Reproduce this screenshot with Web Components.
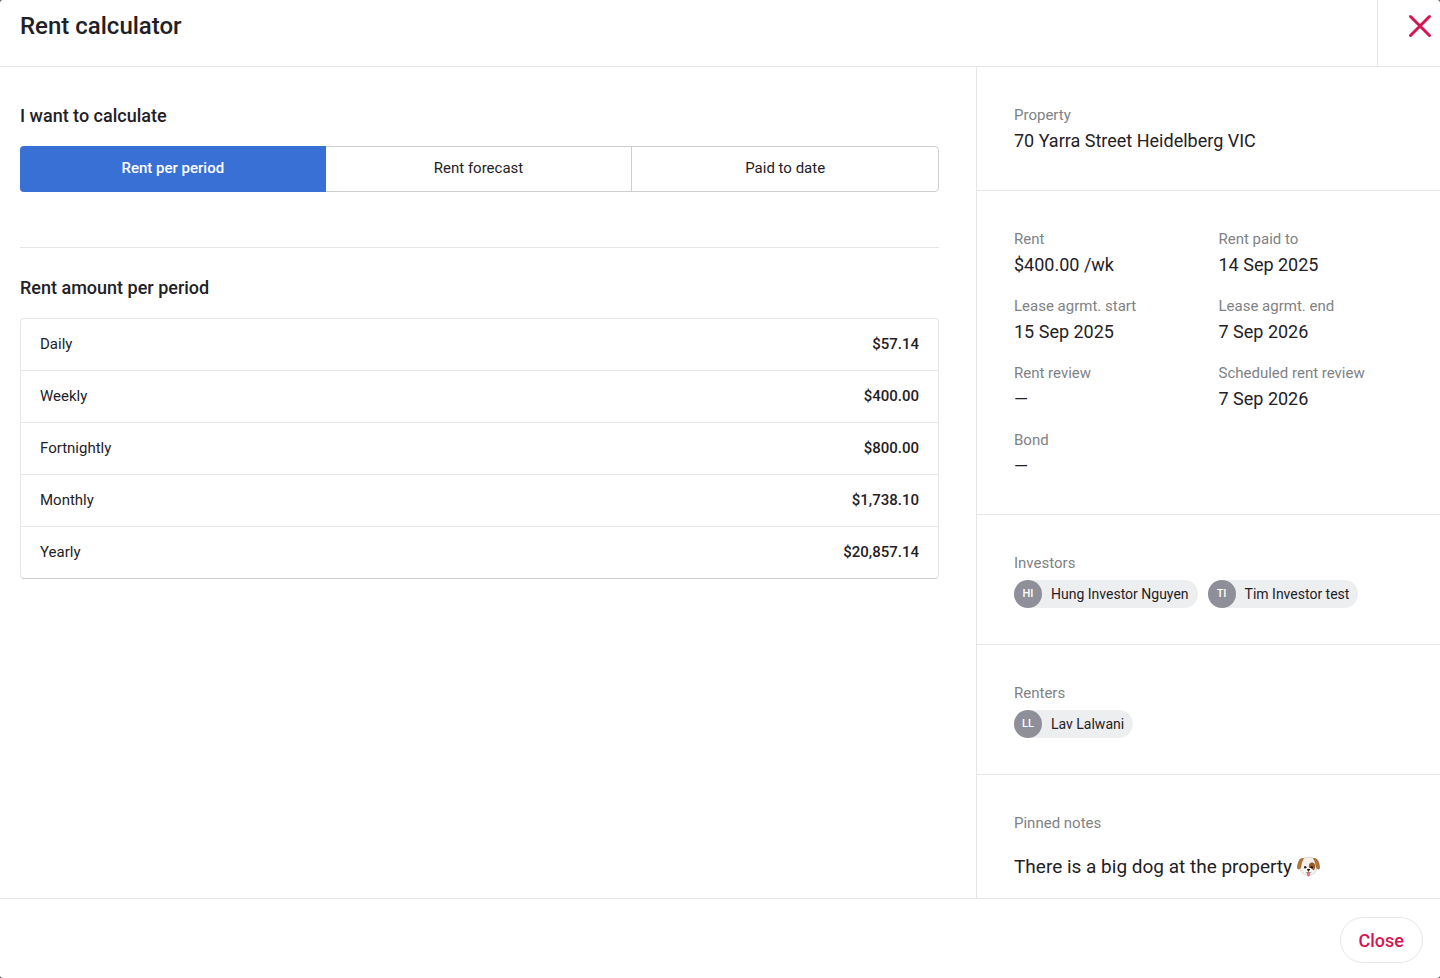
<!DOCTYPE html>
<html lang="en">
<head>
<meta charset="utf-8">
<meta name="viewport" content="width=device-width, initial-scale=1">
<title>Rent calculator</title>
<style>
    html, body {
        height: 100%;
        margin: 0;
    }
    body {
        --line: #e6e6e7;
        --line-strong: #cdced0;
        --ink: #1f2126;
        --muted: #808286;
        --primary: #3970d5;
        --accent: #d6144f;
        background: #55565a;
        color: var(--ink);
        font-family: Roboto, "Liberation Sans", sans-serif;
        font-size: 15px;
    }
</style>
</head>
<body>
<modal-frame heading="Rent calculator">
    <titled-block heading="I want to calculate">
        <segment-control options="Rent per period|Rent forecast|Paid to date"></segment-control>
    </titled-block>
    <titled-block heading="Rent amount per period" class="ruled">
        <amount-table></amount-table>
    </titled-block>

    <side-section slot="side">
        <detail-item label="Property">70 Yarra Street Heidelberg VIC</detail-item>
    </side-section>
    <side-section slot="side" columns>
        <detail-item label="Rent">$400.00 /wk</detail-item>
        <detail-item label="Rent paid to">14 Sep 2025</detail-item>
        <detail-item label="Lease agrmt. start">15 Sep 2025</detail-item>
        <detail-item label="Lease agrmt. end">7 Sep 2026</detail-item>
        <detail-item label="Rent review">—</detail-item>
        <detail-item label="Scheduled rent review">7 Sep 2026</detail-item>
        <detail-item label="Bond">—</detail-item>
    </side-section>
    <side-section slot="side">
        <detail-item label="Investors" kind="chips">
            <person-chip initials="HI">Hung Investor Nguyen</person-chip>
            <person-chip initials="TI">Tim Investor test</person-chip>
        </detail-item>
    </side-section>
    <side-section slot="side">
        <detail-item label="Renters" kind="chips">
            <person-chip initials="LL">Lav Lalwani</person-chip>
        </detail-item>
    </side-section>
    <side-section slot="side">
        <detail-item label="Pinned notes" kind="note">There is a big dog at the property <dog-face></dog-face></detail-item>
    </side-section>

    <pill-button slot="footer">Close</pill-button>
</modal-frame>

<script>
/**
 * BaseElement
 * -----------
 * Clones the template string of the
 * subclass into an open shadow root
 */
class BaseElement extends HTMLElement {
    constructor(){
        super();
        this.template = document.createElement('template');
        this.template.innerHTML = this.constructor.templateString;
        this.attachShadow({mode: 'open'});
        this.shadowRoot.append(
            this.template.content.cloneNode(true)
        );
    }

    // Copy an attribute's value into an element of the shadow root
    fill(selector, attribute){
        this.shadowRoot.querySelector(selector).textContent = this.getAttribute(attribute) || '';
    }
}

/**
 * Full window dialog: title bar, main pane,
 * side pane and footer
 */
class ModalFrame extends BaseElement {
    static templateString = `
<style>
    :host {
        display: flex;
        flex-direction: column;
        height: 100%;
        overflow: hidden;
        border-radius: 3px;
        background: #fff;
    }
    header {
        display: flex;
        justify-content: space-between;
        border-bottom: 1px solid var(--line);
    }
    h1 {
        margin: 0;
        padding: 12px 20px 26px;
        font-size: 24px;
        line-height: 28px;
        font-weight: 500;
    }
    .close {
        display: flex;
        align-items: flex-start;
        margin: 0;
        padding: 14px 8px 0 30px;
        border: 0;
        border-left: 1px solid var(--line);
        background: none;
        color: var(--accent);
        cursor: pointer;
    }
    .panes {
        display: flex;
        flex: 1;
        min-height: 0;
    }
    main {
        flex: 1;
        min-width: 0;
        padding: 36px 37px 36px 20px;
        overflow: auto;
    }
    aside {
        flex: 0 0 464px;
        box-sizing: border-box;
        border-left: 1px solid var(--line);
        overflow: hidden;
    }
    footer {
        display: flex;
        justify-content: flex-end;
        padding: 18px 17px 15px;
        border-top: 1px solid var(--line);
    }
</style>
<header>
    <h1></h1>
    <button class="close" type="button" aria-label="Close dialog">
        <svg width="24" height="24" viewBox="0 0 24 24" fill="none" stroke="currentColor" stroke-width="3" stroke-linecap="round">
            <path d="M2.500 2.500l19 19M21.500 2.500l-19 19"/>
        </svg>
    </button>
</header>
<div class="panes">
    <main><slot></slot></main>
    <aside><slot name="side"></slot></aside>
</div>
<footer><slot name="footer"></slot></footer>
`;

    connectedCallback(){
        this.fill('h1', 'heading');
    }
}

class TitledBlock extends BaseElement {
    static templateString = `
<style>
    :host {
        display: block;
    }
    :host(.ruled) {
        margin-top: 55px;
        padding-top: 27px;
        border-top: 1px solid var(--line);
    }
    h2 {
        margin: 0 0 18px;
        font-size: 18px;
        line-height: 25px;
        font-weight: 500;
    }
</style>
<h2></h2>
<slot></slot>
`;

    connectedCallback(){
        this.fill('h2', 'heading');
    }
}

/**
 * Row of joined buttons, one of which is pressed
 */
class SegmentControl extends BaseElement {
    static templateString = `
<style>
    :host {
        display: flex;
        height: 46px;
        box-sizing: border-box;
        border: 1px solid var(--line-strong);
        border-radius: 4px;
    }
    button {
        flex: 1 1 0;
        margin: 0;
        padding: 0 0 2px;
        border: 0;
        background: none;
        color: inherit;
        font: inherit;
        cursor: pointer;
    }
    button + button {
        border-left: 1px solid var(--line-strong);
    }
    button[aria-pressed="true"] {
        margin: -1px 0 -1px -1px;
        border-radius: 4px 0 0 4px;
        background: var(--primary);
        color: #fff;
        font-weight: 500;
    }
    button[aria-pressed="true"] + button {
        border-left: 0;
    }
</style>
`;

    connectedCallback(){
        this.getAttribute('options').split('|').forEach((text, index) => {
            let button = document.createElement('button');
            button.type = 'button';
            button.textContent = text;
            button.setAttribute('aria-pressed', index == 0);
            button.addEventListener('click', () => this.select(button));
            this.shadowRoot.append(button);
        });
    }

    select(chosen){
        this.shadowRoot.querySelectorAll('button').forEach(button => {
            button.setAttribute('aria-pressed', button == chosen);
        });
    }
}

class AmountTable extends BaseElement {
    static templateString = `
<style>
    :host {
        display: block;
        border: 1px solid var(--line);
        border-bottom-color: var(--line-strong);
        border-radius: 4px;
    }
    table {
        width: 100%;
        border-collapse: separate;
        border-spacing: 0;
    }
    th, td {
        height: 49px;
        padding: 0 19px 2px;
        border-bottom: 1px solid var(--line);
        font-weight: 400;
        text-align: left;
    }
    td {
        font-weight: 500;
        text-align: right;
    }
    tr:last-child > * {
        border-bottom: 0;
    }
</style>
<table>
    <tbody>
        <tr><th scope="row">Daily</th><td>$57.14</td></tr>
        <tr><th scope="row">Weekly</th><td>$400.00</td></tr>
        <tr><th scope="row">Fortnightly</th><td>$800.00</td></tr>
        <tr><th scope="row">Monthly</th><td>$1,738.10</td></tr>
        <tr><th scope="row">Yearly</th><td>$20,857.14</td></tr>
    </tbody>
</table>
`;
}

class SideSection extends BaseElement {
    static templateString = `
<style>
    :host {
        display: grid;
        gap: 16px 0;
        padding: 36px 17px 36px 37px;
        border-bottom: 1px solid var(--line);
    }
    :host([columns]) {
        grid-template-columns: 1fr 1fr;
        padding-bottom: 35px;
    }
</style>
<slot></slot>
`;
}

/**
 * Muted label over a value. The kind attribute
 * picks between plain text, chips and a note
 */
class DetailItem extends BaseElement {
    static templateString = `
<style>
    :host {
        display: block;
    }
    .label {
        line-height: 24px;
        color: var(--muted);
    }
    .value {
        margin-top: 1px;
        font-size: 18px;
        line-height: 26px;
    }
    :host([kind="chips"]) .value {
        display: flex;
        flex-wrap: wrap;
        gap: 10px;
        margin-top: 5px;
    }
    :host([kind="note"]) .value {
        margin-top: 19px;
        font-size: 19px;
    }
</style>
<div class="label"></div>
<div class="value"><slot></slot></div>
`;

    connectedCallback(){
        this.fill('.label', 'label');
    }
}

class PersonChip extends BaseElement {
    static templateString = `
<style>
    :host {
        display: inline-flex;
        align-items: center;
        gap: 9px;
        padding-right: 9px;
        border-radius: 14px;
        background: #edeef0;
        font-size: 14px;
        line-height: 28px;
    }
    .avatar {
        width: 28px;
        border-radius: 50%;
        background: #8e8f98;
        color: #fff;
        font-size: 11px;
        font-weight: 500;
        text-align: center;
    }
</style>
<span class="avatar"></span>
<span><slot></slot></span>
`;

    connectedCallback(){
        this.fill('.avatar', 'initials');
    }
}

class DogFace extends BaseElement {
    static templateString = `
<style>
    :host {
        display: inline-block;
        vertical-align: -4px;
    }
    svg {
        display: block;
    }
</style>
<svg width="23" height="20" viewBox="0 0 23 20" role="img" aria-label="dog face">
    <path d="M5 3C6.500 1 9 .3 11.500.3S16.500 1 18 3c1.700 2.300 2.300 6 1.700 9-.8 4-4 6-8.200 6s-7.400-2-8.200-6C2.700 9 3.300 5.300 5 3z" fill="#f3efec" stroke="#c9c0b9" stroke-width=".6"/>
    <path d="M6.600 1.400C4 1 2.500 2.400 1.600 5 .8 7.500.2 9.500.4 11c.3 1.600 2.200 1.300 3.100-.2C4.300 8.500 4.100 5 6.600 1.400z" fill="#b0763a" stroke="#7c4b1d" stroke-width=".5"/>
    <path d="M16.400 1.400c2.600-.4 4.100 1 5 3.600.8 2.500 1.400 4.500 1.200 6-.3 1.600-2.200 1.300-3.100-.2-.8-2.300-.6-5.800-3.100-9.400z" fill="#b0763a" stroke="#7c4b1d" stroke-width=".5"/>
    <ellipse cx="15" cy="9.500" rx="3.100" ry="4" fill="#9d5b20"/>
    <ellipse cx="11.500" cy="14" rx="4.400" ry="3.300" fill="#fff"/>
    <path d="M10 15.500h3v2.600a1.500 1.500 0 0 1-3 0z" fill="#ee6f87"/>
    <circle cx="8.200" cy="10.200" r="1.200" fill="#241a17"/>
    <circle cx="14.800" cy="10.200" r="1.200" fill="#241a17"/>
    <path d="M9.900 12.200c.5-.7 2.700-.7 3.200 0 .3.800-.9 1.700-1.600 1.700s-1.900-.9-1.600-1.700z" fill="#241a17"/>
    <path d="M11.500 13.800v1.400M8.500 15c1 1 2.300.9 3 .1.700.8 2 .9 3-.1" fill="none" stroke="#4b3a35" stroke-width=".6"/>
</svg>
`;
}

class PillButton extends BaseElement {
    static templateString = `
<style>
    :host {
        display: block;
    }
    button {
        display: block;
        height: 46px;
        margin: 0;
        padding: 0 18px;
        border: 1px solid var(--line);
        border-radius: 23px;
        background: #fff;
        color: var(--accent);
        font: inherit;
        font-size: 18px;
        font-weight: 500;
        cursor: pointer;
    }
</style>
<button type="button"><slot></slot></button>
`;
}

window.customElements.define('modal-frame', ModalFrame);
window.customElements.define('titled-block', TitledBlock);
window.customElements.define('segment-control', SegmentControl);
window.customElements.define('amount-table', AmountTable);
window.customElements.define('side-section', SideSection);
window.customElements.define('detail-item', DetailItem);
window.customElements.define('person-chip', PersonChip);
window.customElements.define('dog-face', DogFace);
window.customElements.define('pill-button', PillButton);
</script>
</body>
</html>
